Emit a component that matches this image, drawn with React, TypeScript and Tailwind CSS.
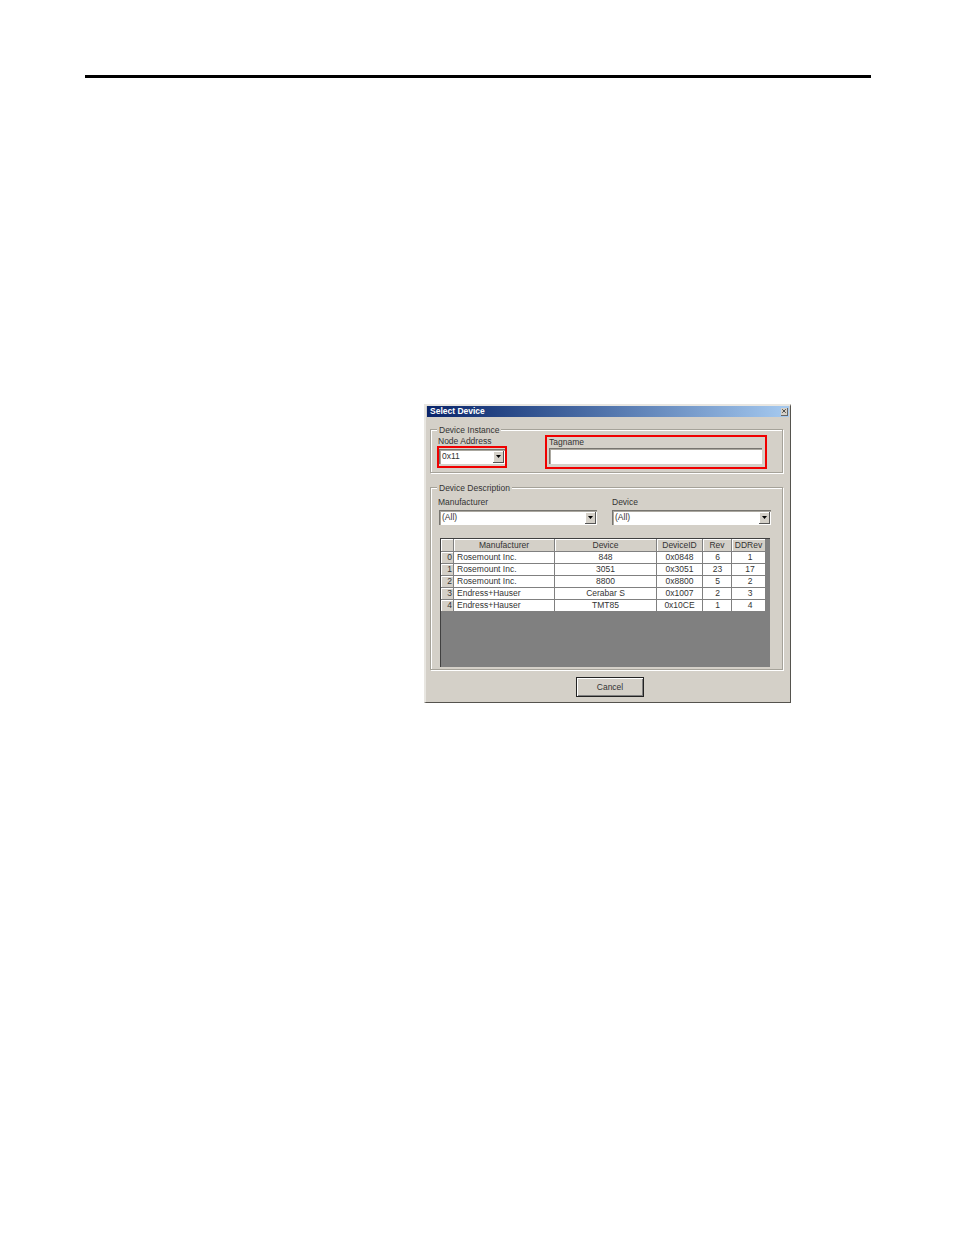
import { X } from "lucide-react";

const rows = [
  ["0", "Rosemount Inc.", "848", "0x0848", "6", "1"],
  ["1", "Rosemount Inc.", "3051", "0x3051", "23", "17"],
  ["2", "Rosemount Inc.", "8800", "0x8800", "5", "2"],
  ["3", "Endress+Hauser", "Cerabar S", "0x1007", "2", "3"],
  ["4", "Endress+Hauser", "TMT85", "0x10CE", "1", "4"],
];

const cols = "grid grid-cols-[13px_101px_102px_46px_29px_34px]";
const headCell =
  "h-[13px] bg-[#d4d0c8] border-r border-b border-[#808080] shadow-[inset_1px_1px_0_#fff] text-center leading-[12px]";
const cell = "h-[12px] border-r border-b border-[#808080] text-center leading-[11px]";

function Combo({ value, width }: { value: string; width: string }) {
  return (
    <div className={`${width} h-[15px] bg-white border-t border-l border-[#77756f] shadow-[inset_1px_1px_0_#aaa79f] flex items-center justify-between pl-[2px] pr-[1px]`}>
      <span className="leading-[12px] mb-[2px]">{value}</span>
      <div className="w-[11px] h-[12px] bg-[#d4d0c8] border-r border-b border-[#555] shadow-[inset_1px_1px_0_#fff] flex items-center justify-center">
        <svg width="5" height="3" viewBox="0 0 5 3">
          <path d="M0 0h5L2.5 3z" fill="#000" />
        </svg>
      </div>
    </div>
  );
}

function Group({ title, className, children }: { title: string; className: string; children: React.ReactNode }) {
  return (
    <div className={`relative border border-[#a5a299] shadow-[inset_1px_1px_0_#fff,1px_1px_0_#fff] ${className}`}>
      <span className="absolute left-[6px] -top-[5px] bg-[#d4d0c8] px-[2px] leading-[10px]">{title}</span>
      {children}
    </div>
  );
}

export default function App() {
  return (
    <div className="min-h-[1235px] bg-white pt-[75px] font-['Liberation_Sans',Arial,sans-serif] text-[8.5px] text-[#333]">
      <div className="ml-[85px] w-[786px] h-[3px] bg-black" />

      <div className="ml-[424px] mt-[326px] w-[367px] h-[299px] bg-[#d4d0c8] border-t-2 border-l-2 border-r border-b border-t-[#e8e6e1] border-l-[#e8e6e1] border-r-[#55534e] border-b-[#55534e] pl-[1px] pr-[1px]">
        <div className="h-[11px] bg-gradient-to-r from-[#0a246a] to-[#a6caf0] flex items-center justify-between pl-[3px] pr-[1px]">
          <span className="font-bold text-white leading-[11px]">Select Device</span>
          <div className="w-[7px] h-[8px] bg-[#d4d0c8] border-r border-b border-[#666] flex items-center justify-center">
            <X size={6} strokeWidth={3} color="#222" />
          </div>
        </div>

        <Group title="Device Instance" className="ml-[3px] mt-[12px] w-[353px] h-[44px] pl-[6px] flex items-start">
          <div className="w-[70px] mt-[7px]">
            <div className="h-[9px] leading-[9px] ml-[1px]">Node Address</div>
            <div className="w-[70px] h-[22px] border-2 border-[#f00000] py-[1px]">
              <Combo value="0x11" width="w-[66px]" />
            </div>
          </div>
          <div className="ml-[38px] mt-[5px] w-[222px] h-[34px] border-2 border-[#f00000] pl-[2px]">
            <div className="h-[10px] mt-[1px] leading-[9px]">Tagname</div>
            <div className="w-[213px] h-[16px] bg-white border-t border-l border-[#77756f] shadow-[inset_1px_1px_0_#aaa79f]" />
          </div>
        </Group>

        <Group title="Device Description" className="ml-[3px] mt-[14px] w-[353px] h-[183px] pl-[8px]">
          <div className="flex gap-[15px] mt-[10px]">
            <div className="w-[158px]">
              <div className="h-[12px] leading-[9px] -ml-[1px]">Manufacturer</div>
              <Combo value="(All)" width="w-[158px]" />
            </div>
            <div className="w-[159px]">
              <div className="h-[12px] leading-[9px]">Device</div>
              <Combo value="(All)" width="w-[159px]" />
            </div>
          </div>

          <div className="ml-[1px] mt-[13px] w-[330px] h-[129px] bg-[#808080] border-t border-l border-[#404040]">
            <div className="w-[325px]">
              <div className={cols}>
                <div className={headCell} />
                <div className={headCell}>Manufacturer</div>
                <div className={headCell}>Device</div>
                <div className={headCell}>DeviceID</div>
                <div className={headCell}>Rev</div>
                <div className={headCell}>DDRev</div>
              </div>
              {rows.map((r) => (
                <div key={r[0]} className={`${cols} bg-white`}>
                  <div className="h-[12px] bg-[#d4d0c8] border-r border-b border-[#808080] shadow-[inset_1px_1px_0_#fff] text-right pr-[1px] leading-[11px]">{r[0]}</div>
                  <div className="h-[12px] border-r border-b border-[#808080] pl-[3px] leading-[11px]">{r[1]}</div>
                  <div className={cell}>{r[2]}</div>
                  <div className={cell}>{r[3]}</div>
                  <div className={`${cell} pl-[1px]`}>{r[4]}</div>
                  <div className={`${cell} pl-[3px]`}>{r[5]}</div>
                </div>
              ))}
            </div>
          </div>
        </Group>

        <button className="block ml-[149px] mt-[7px] w-[68px] h-[20px] bg-[#d4d0c8] border border-[#222] shadow-[inset_1px_1px_0_#fff,inset_-1px_-1px_0_#808080] text-center leading-[18px] text-[8.5px]">
          Cancel
        </button>
      </div>
    </div>
  );
}
